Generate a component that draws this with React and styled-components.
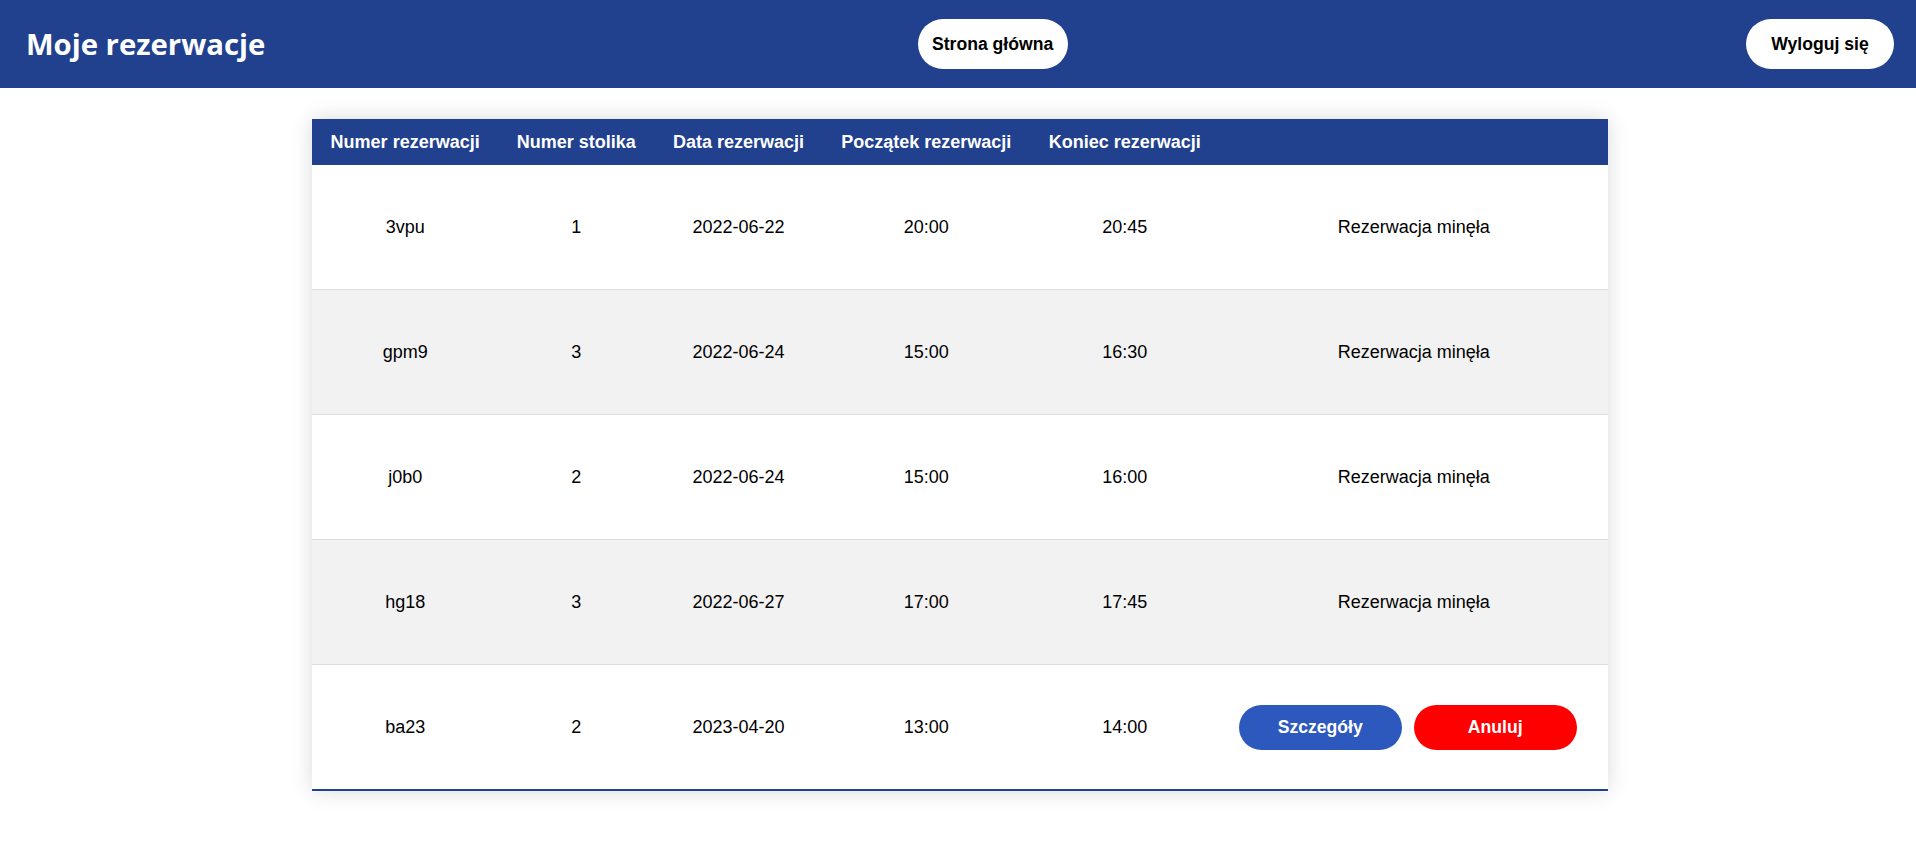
import React from "react";
import styled, { createGlobalStyle } from "styled-components";

const GlobalStyle = createGlobalStyle`
  body {
    margin: 0;
    background: #ffffff;
    font-family: "Liberation Sans", Arial, sans-serif;
    color: #000;
  }
`;

const Header = styled.header`
  display: flex;
  align-items: center;
  justify-content: space-between;
  height: 88px;
  padding: 0 22px 0 26px;
  background: #21408e;
`;

const Title = styled.h1`
  margin: 0;
  font-family: "Open Sans", sans-serif;
  font-size: 29.3px;
  font-weight: 700;
  color: #ffffff;
`;

const NavButton = styled.button`
  width: ${(p) => p.width || 150}px;
  height: 50px;
  margin-right: ${(p) => p.shift || 0}px;
  border: none;
  border-radius: 25px;
  background: #ffffff;
  color: #000;
  font-family: "Liberation Sans", Arial, sans-serif;
  font-size: 17.6px;
  font-weight: 700;
  cursor: pointer;
`;

const Table = styled.table`
  width: 1296px;
  margin: 31px auto;
  margin-left: calc((100% - 1296px) / 2 + 2px);
  border-collapse: collapse;
  box-shadow: 0 0 20px rgba(0, 0, 0, 0.15);
  font-size: 18px;
`;

const HeadRow = styled.tr`
  background: #21408e;
  color: #ffffff;
`;

const Th = styled.th`
  height: 46px;
  padding: 0 18px;
  font-weight: 700;
  text-align: center;
  white-space: nowrap;
`;

const Row = styled.tr`
  background: ${(p) => (p.alt ? "#f2f2f2" : "#ffffff")};
  border-bottom: ${(p) => (p.last ? "2px solid #21408e" : "1px solid #dddddd")};
`;

const Td = styled.td`
  height: 124px;
  padding: 0 18px;
  text-align: center;
  white-space: nowrap;
`;

const ActionButton = styled.button`
  width: 163px;
  height: 45px;
  margin-right: 12px;
  border: none;
  border-radius: 23px;
  background: ${(p) => (p.danger ? "#ff0000" : "#2d58bd")};
  color: #ffffff;
  font-family: "Liberation Sans", Arial, sans-serif;
  font-size: 17.6px;
  font-weight: 700;
  cursor: pointer;
`;

const reservations = [
  { id: "3vpu", table: 1, date: "2022-06-22", start: "20:00", end: "20:45", past: true },
  { id: "gpm9", table: 3, date: "2022-06-24", start: "15:00", end: "16:30", past: true },
  { id: "j0b0", table: 2, date: "2022-06-24", start: "15:00", end: "16:00", past: true },
  { id: "hg18", table: 3, date: "2022-06-27", start: "17:00", end: "17:45", past: true },
  { id: "ba23", table: 2, date: "2023-04-20", start: "13:00", end: "14:00", past: false },
];

export default function App() {
  return (
    <>
      <GlobalStyle />
      <Header>
        <Title>Moje rezerwacje</Title>
        <NavButton shift={26}>Strona główna</NavButton>
        <NavButton width={148}>Wyloguj się</NavButton>
      </Header>
      <Table>
        <thead>
          <HeadRow>
            <Th>Numer rezerwacji</Th>
            <Th>Numer stolika</Th>
            <Th>Data rezerwacji</Th>
            <Th>Początek rezerwacji</Th>
            <Th>Koniec rezerwacji</Th>
            <Th></Th>
          </HeadRow>
        </thead>
        <tbody>
          {reservations.map((r, i) => (
            <Row key={r.id} alt={i % 2 === 1} last={i === reservations.length - 1}>
              <Td>{r.id}</Td>
              <Td>{r.table}</Td>
              <Td>{r.date}</Td>
              <Td>{r.start}</Td>
              <Td>{r.end}</Td>
              <Td>
                {r.past ? (
                  "Rezerwacja minęła"
                ) : (
                  <>
                    <ActionButton>Szczegóły</ActionButton>
                    <ActionButton danger>Anuluj</ActionButton>
                  </>
                )}
              </Td>
            </Row>
          ))}
        </tbody>
      </Table>
    </>
  );
}
